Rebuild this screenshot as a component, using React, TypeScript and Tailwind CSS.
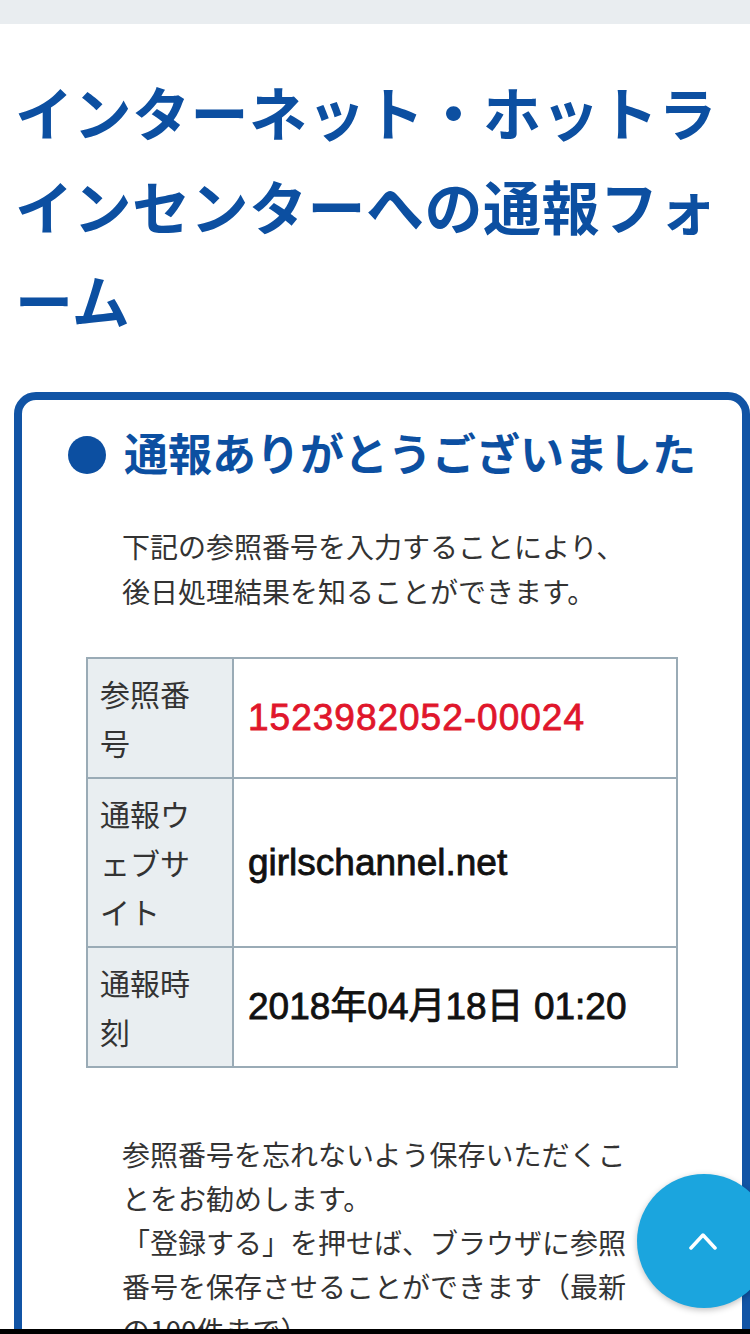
import React from 'react';

const jp = '[font-family:"Noto_Sans_CJK_JP","Noto_Sans_CJK_SC",sans-serif]';

const rows = [
  { label: '参照番号', value: '1523982052-00024', red: true },
  { label: '通報ウェブサイト', value: 'girlschannel.net', red: false },
  { label: '通報時刻', value: '2018年04月18日 01:20', red: false },
];

const ReportDone: React.FC = () => {
  return (
    <div className={`min-h-screen bg-white ${jp}`}>
      {/* top bar */}
      <div className="h-[24px] bg-[#e9edf0]" />

      <h1 className="mt-[40px] px-[15px] text-[58px] leading-[94px] font-bold tracking-[0.5px] text-[#0c4fa1]">
        インターネット・ホットラインセンターへの通報フォーム
      </h1>

      {/* card */}
      <div className="mt-[46px] ml-[14px] w-[736px] rounded-[22px] border-[8px] border-[#1154a5] pt-[22px] pb-[40px]">
        <div className="flex items-start pl-[46px]">
          <span className="mt-[14px] h-[38px] w-[38px] shrink-0 rounded-full bg-[#0c4fa1]" />
          <h2 className="ml-[18px] text-[44px] leading-[60px] font-bold text-[#0c4fa1]">
            通報ありがとうございました
          </h2>
        </div>

        <p className="mt-[42px] ml-[100px] w-[520px] text-[28px] leading-[45px] text-[#333]">
          下記の参照番号を入力することにより、
          <br />
          後日処理結果を知ることができます。
        </p>

        <div className="mt-[43px] ml-[64px] w-[592px] border-2 border-[#9aabb6]">
          {rows.map((row, i) => (
            <div key={i} className={`flex ${i > 0 ? 'border-t-2 border-[#9aabb6]' : ''}`}>
              <div className="w-[146px] shrink-0 border-r-2 border-[#9aabb6] bg-[#e9eef1] pt-[10px] pb-[10px] pl-[12px] pr-[14px] text-[30px] leading-[49px] text-[#333]">
                {row.label}
              </div>
              <div
                className={`flex flex-1 items-center pl-[14px] text-[37px] [font-family:"Liberation_Sans","Noto_Sans_CJK_JP",sans-serif] [-webkit-text-stroke:0.8px] ${
                  row.red ? 'tracking-[1px] text-[#e0162b]' : 'text-[#111]'
                }`}
              >
                {row.value}
              </div>
            </div>
          ))}
        </div>

        <p className="mt-[64px] ml-[100px] w-[520px] text-[28px] leading-[44px] text-[#333]">
          参照番号を忘れないよう保存いただくことをお勧めします。
          <br />
          「登録する」を押せば、ブラウザに参照番号を保存させることができます（最新の100件まで）
        </p>
      </div>

      {/* back to top */}
      <button className="fixed left-[637px] top-[1174px] flex h-[134px] w-[134px] items-center justify-center rounded-full bg-[#1ba5de] shadow-[0_2px_6px_rgba(0,0,0,0.25)]">
        <svg width="28" height="18" viewBox="0 0 28 18" fill="none" className="ml-[-2px]">
          <polyline points="2,16 14,3 26,16" stroke="white" strokeWidth="3.5" strokeLinecap="round" strokeLinejoin="round" />
        </svg>
      </button>

      <div className="fixed bottom-0 left-0 right-0 h-[5px] bg-black" />
    </div>
  );
};

export default function App() {
  return <ReportDone />;
}
